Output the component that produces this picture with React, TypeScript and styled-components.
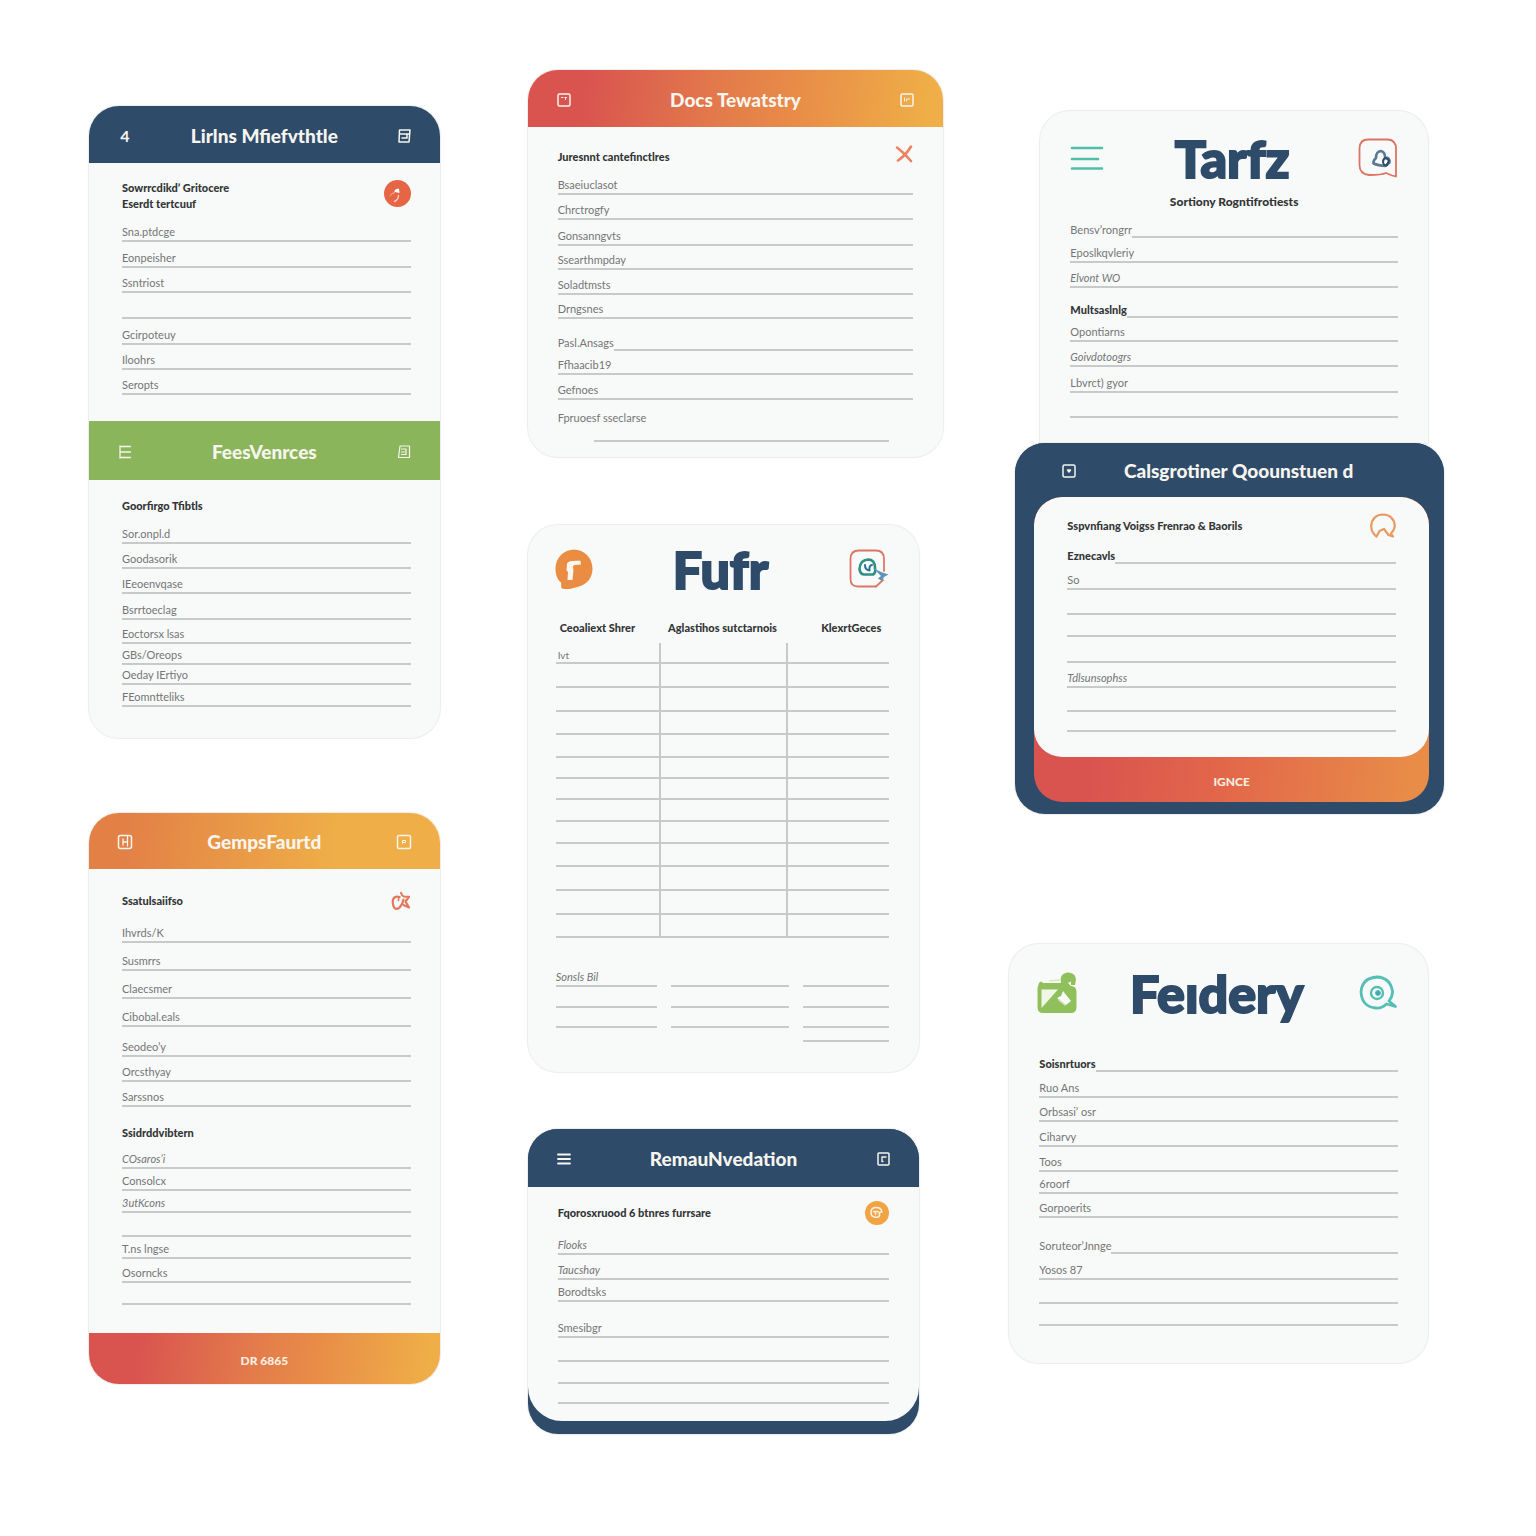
import React, { ReactNode, useId } from "react";
import styled, { createGlobalStyle, css } from "styled-components";

const color = {
  navy: "#2f4b6a",
  green: "#8ab55b",
  paper: "#f8f9f9",
  edge: "#ebecec",
  line: "#c8caca",
  ink: "#333536",
  label: "#747677",
  red: "#d9544f",
  coral: "#e2664a",
  orange: "#e88c48",
  amber: "#efae47",
  teal: "#4fc0a8",
};

const sunset = `linear-gradient(96deg, ${color.red} 14%, #e2784b 44%, ${color.orange} 64%, ${color.amber} 96%)`;
const dusk = `linear-gradient(96deg, ${color.red} 20%, ${color.coral} 50%, ${color.orange} 95%)`;
const dawn = `linear-gradient(96deg, #e28046 10%, ${color.amber} 70%)`;

const GlobalStyle = createGlobalStyle`
  *, *::before, *::after { box-sizing: border-box; }
  body { margin: 0; background: #fff; font-family: Lato, "Open Sans", sans-serif; color: ${color.ink}; }
  h1, h2, h3 { margin: 0; }
  button, input { font: inherit; border: 0; background: none; padding: 0; color: inherit; }
  svg { display: block; fill: none; stroke-linecap: round; stroke-linejoin: round; }
`;

const Page = styled.main`
  display: grid;
  grid-template-columns: minmax(0, 373fr) minmax(0, 416fr) minmax(0, 435fr);
  column-gap: 66px;
  align-items: start;
  padding: 70px 92px 100px 89px;
`;

const Column = styled.div<{ $top?: number; $right?: number }>`
  display: flex;
  flex-direction: column;
  padding-top: ${(p) => p.$top ?? 0}px;
  padding-right: ${(p) => p.$right ?? 0}px;
`;

const Card = styled.section<{
  $top?: number;
  $left?: number;
  $right?: number;
  $tone?: string;
  $flatBottom?: boolean;
}>`
  margin: ${(p) => `${p.$top ?? 0}px ${p.$right ?? 0}px 0 ${p.$left ?? 0}px`};
  background: ${(p) => p.$tone ?? color.paper};
  border-radius: ${(p) => (p.$flatBottom ? "30px 30px 0 0" : "30px")};
  box-shadow: 0 0 1px 1px ${color.edge};
  overflow: hidden;
`;

const Bar = styled.header<{ $height: number; $fill: string; $inset?: number }>`
  display: grid;
  grid-template-columns: 16px 1fr 16px;
  align-items: center;
  height: ${(p) => p.$height}px;
  padding: 2px 28px 0 ${(p) => p.$inset ?? 28}px;
  background: ${(p) => p.$fill};
  color: #f7f5ee;
`;

const BarTitle = styled.h2`
  font-size: 19px;
  line-height: 24px;
  font-weight: 900;
  text-align: center;
  white-space: nowrap;
`;

const IconButton = styled.button`
  display: flex;
  align-items: center;
  justify-content: center;
  cursor: pointer;
`;

const Glyph = styled.span`
  font-size: 16px;
  line-height: 16px;
  font-weight: 700;
`;

const Body = styled.div<{ $top?: number; $bottom: number; $left?: number; $right?: number }>`
  padding: ${(p) => `${p.$top ?? 0}px ${p.$right ?? 30}px ${p.$bottom}px ${p.$left ?? 30}px`};
`;

const SectionHead = styled.div<{ $tall?: boolean; $gap?: number; $raise?: boolean }>`
  display: flex;
  justify-content: space-between;
  align-items: ${(p) => (p.$raise ? "flex-start" : "center")};
  height: ${(p) => (p.$tall ? 32 : 24)}px;
  margin-top: ${(p) => p.$gap ?? 0}px;
`;

const SectionTitle = styled.h3`
  align-self: center;
  font-size: 11px;
  line-height: 16px;
  font-weight: 900;
`;

const Row = styled.div<{ $height: number; $bare?: boolean }>`
  display: flex;
  align-items: flex-end;
  height: ${(p) => p.$height}px;
  border-bottom: ${(p) => (p.$bare ? "0" : `2px solid ${color.line}`)};
`;

const Label = styled.label<{ $bold?: boolean; $italic?: boolean }>`
  font-size: 11px;
  line-height: 16px;
  white-space: nowrap;
  color: ${color.label};
  ${(p) => p.$italic && css`font-style: italic;`}
  ${(p) => p.$bold && css`font-weight: 900; color: ${color.ink};`}
`;

const Entry = styled.input<{ $ruled?: boolean }>`
  flex: 1;
  min-width: 0;
  height: 16px;
  font-size: 11px;
  outline: none;
  ${(p) => p.$ruled && css`border-bottom: 2px solid ${color.line};`}
`;

const ShortRule = styled.div`
  display: flex;
  padding: 0 24px 0 36px;
`;

const ActionButton = styled.button<{ $height: number; $fill?: string }>`
  display: block;
  width: 100%;
  height: ${(p) => p.$height}px;
  padding-top: 4px;
  background: ${(p) => p.$fill ?? "transparent"};
  color: #fbeee0;
  font-size: 12px;
  font-weight: 900;
  text-align: center;
  cursor: pointer;
`;

const Brand = styled.header<{ $top?: number; $height: number }>`
  display: grid;
  grid-template-columns: 36px 1fr 40px;
  align-items: center;
  justify-items: center;
  height: ${(p) => p.$height}px;
  margin-top: ${(p) => p.$top ?? 0}px;
  padding-bottom: 4px;
`;

const Wordmark = styled.h1`
  font-size: 52px;
  line-height: 60px;
  font-weight: 900;
  color: ${color.navy};
  -webkit-text-stroke: 2px ${color.navy};
`;

const Subtitle = styled.p`
  margin: 0;
  font-size: 12px;
  line-height: 20px;
  font-weight: 900;
  text-align: center;
`;

const Ledger = styled.table`
  width: 100%;
  table-layout: fixed;
  border-collapse: separate;
  border-spacing: 0;
`;

const LedgerHead = styled.th<{ $align: "left" | "center" | "right"; $width?: string }>`
  width: ${(p) => p.$width ?? "auto"};
  height: 26px;
  padding: 0 ${(p) => (p.$align === "right" ? 8 : 0)}px 4px ${(p) => (p.$align === "left" ? 4 : 0)}px;
  font-size: 11px;
  line-height: 16px;
  font-weight: 900;
  white-space: nowrap;
  text-align: ${(p) => p.$align};
`;

const LedgerCell = styled.td<{ $height: number }>`
  height: ${(p) => p.$height}px;
  padding: 0 0 0 2px;
  border-bottom: 2px solid ${color.line};
  font-size: 10px;
  line-height: 14px;
  vertical-align: bottom;
  color: ${color.label};
  & + & { border-left: 2px solid ${color.line}; }
`;

const SignOff = styled.div`
  display: grid;
  grid-template-columns: minmax(0, 102fr) minmax(0, 118fr) minmax(0, 87fr);
  column-gap: 14px;
  align-items: start;
  height: 104px;
`;

const Sheet = styled.div<{ $allRound?: boolean }>`
  background: ${color.paper};
  border-radius: ${(p) => (p.$allRound ? "28px" : "0 0 34px 34px")};
`;

const Tray = styled.div`
  margin: 0 15px 12px 19px;
  border-radius: 28px;
  background: ${dusk};
  overflow: hidden;
`;

const BottomLip = styled.div`
  height: 13px;
`;

type FieldProps = {
  height: number;
  label?: string;
  bold?: boolean;
  italic?: boolean;
  inline?: boolean;
  bare?: boolean;
};

function Field({ height, label, bold, italic, inline, bare }: FieldProps) {
  const id = useId();
  return (
    <Row $height={height} $bare={inline || bare}>
      {label && (
        <Label htmlFor={id} $bold={bold} $italic={italic}>
          {label}
        </Label>
      )}
      <Entry id={id} type="text" $ruled={inline} aria-label={label ? undefined : "Blank line"} />
    </Row>
  );
}

type FieldSpec = [number, string?, ("italic" | "inline" | "boldInline" | "bare")?];

function Fields({ rows }: { rows: FieldSpec[] }) {
  return (
    <>
      {rows.map(([height, label, kind], i) => (
        <Field
          key={i}
          height={height}
          label={label}
          italic={kind === "italic"}
          inline={kind === "inline" || kind === "boldInline"}
          bold={kind === "boldInline"}
          bare={kind === "bare"}
        />
      ))}
    </>
  );
}

type BarIconProps = { children?: ReactNode; name: string };

function BarIcon({ children, name }: BarIconProps) {
  return (
    <IconButton type="button" aria-label={name}>
      <svg width="16" height="16" viewBox="0 0 16 16" stroke="currentColor" strokeWidth="1.5">
        {children}
      </svg>
    </IconButton>
  );
}

const Box = () => <rect x="2" y="2" width="12" height="12" rx="1.5" />;

function ChirpBadge() {
  return (
    <svg width="27" height="27" viewBox="0 0 27 27">
      <circle cx="13.5" cy="13.5" r="13.5" fill="#e56545" />
      <path d="M10 11.5 L12 9 L15 8.6 L15.5 13 L13 12.4 Z" fill="#fff" />
      <path d="M6 15.5 Q8 13 10.5 12.5" stroke="#f3b7a4" strokeWidth="1" />
      <path d="M14.5 15.5 Q14.5 19.5 10.5 21.5" stroke="#f7cdbf" strokeWidth="1.4" />
    </svg>
  );
}

function StarLoop() {
  return (
    <svg width="20" height="20" viewBox="0 0 20 20" stroke="#e3785c" strokeWidth="2.2">
      <path d="M8.5 6 Q4 4.500 2.200 8 Q0.800 13 3.500 17 Q6.500 19 9 16 Q12 12.500 12.500 8.500" />
      <path d="M10 2 Q11 5 13 5.500 L18 5.800 L14.500 10.500 L18 16.500 L12.500 14" />
      <path d="M8.500 6 Q7 7.500 7.500 9.500" strokeWidth="1.600" />
    </svg>
  );
}

function CrossMark() {
  return (
    <svg width="18" height="18" viewBox="0 0 18 18" stroke="#ea8263" strokeWidth="2.6">
      <path d="M2 2.500 Q8 7 16 16" />
      <path d="M16 1.500 Q11 10 3 15.500" />
    </svg>
  );
}

function SpeechF() {
  return (
    <svg width="38" height="42" viewBox="0 0 38 42">
      <path
        d="M19 1.500 C29 1.500 37.500 10 37.500 20.500 C37.500 30 32 36 24 38.500 C18 40.500 12 42 7 40.500 C5.500 39.500 6.500 37 6 34.500 C2 31.500 0.500 26 0.500 20.500 C0.500 10 9 1.500 19 1.500 Z"
        fill="#ea8d42"
      />
      <path
        d="M12 15.500 C14 12.500 19 13 25.500 12.800 L26 16.500 L19.500 17 C17.500 17.500 18 20 18.500 22 L17.500 32 L12.500 32 L13 24 L11.500 22.500 Z"
        fill="#fdf6ee"
      />
    </svg>
  );
}

function EyeCard() {
  return (
    <svg width="40" height="40" viewBox="0 0 40 40">
      <path
        d="M27 37.500 H9 Q1.500 37.500 1.500 30 V10 Q1.500 1.500 10 1.500 H27 Q35 1.500 35 10 V22"
        stroke="#dc7768"
        strokeWidth="1.800"
      />
      <path d="M34 31 L27 37.500" stroke="#dc7768" strokeWidth="1.800" />
      <path
        d="M26 19 Q26 10.500 19 10.500 Q11 11 10.500 20 Q11 25 15 25.500 H24 Q27 24 26 19 Z"
        stroke="#2c9183"
        strokeWidth="2.600"
      />
      <path d="M16 16 Q16 21 20.500 21.500 Q20 16 23 16" stroke="#2b6f95" strokeWidth="2" />
      <path d="M24 19 L32 23 L39.500 25.500 L35 28 L33 32 L29 29.500 L32 27 Z" fill="#5d94b8" />
    </svg>
  );
}

function PhoneBadge() {
  return (
    <svg width="24" height="24" viewBox="0 0 24 24">
      <circle cx="12" cy="12" r="12" fill="#f0a444" />
      <path
        d="M6 11.500 Q6 6.500 11 6.500 Q16.500 6.500 16.800 11 L14 11.500 Q15.500 14 13.500 16 Q8 17 6.500 14 Z"
        stroke="#fdf0dc"
        strokeWidth="1.600"
      />
      <path d="M8.500 10.500 H13 M10.500 10.500 V13.500" stroke="#fdf0dc" strokeWidth="1.500" />
    </svg>
  );
}

function MintMenu() {
  return (
    <svg width="36" height="26" viewBox="0 0 36 26" stroke={color.teal} strokeWidth="2.600">
      <path d="M2 3 H32 M2 14 H28 M2 23.500 H32" />
    </svg>
  );
}

function ChatSquare() {
  return (
    <svg width="40" height="40" viewBox="0 0 40 40">
      <path
        d="M38 38.500 L34 37.500 L28 35 Q24 37 11 37 Q1.500 36 1.500 27 V10 Q2 1.500 10 1.500 H30 Q38 2 38 11 Z"
        stroke="#dc7464"
        strokeWidth="1.800"
      />
      <path
        d="M15.500 25.500 Q15 22.500 18 20 Q18 13.500 23 13 Q27 14 27 19 Q32 19.500 31.500 24.500 L27.500 28 Q20 27.500 15.500 25.500 Z"
        stroke="#5b7895"
        strokeWidth="2.600"
      />
      <path d="M25 24 Q25 20.500 28 20 L31 22.500 L29 27 Q25.500 28 25 24 Z" stroke={color.navy} strokeWidth="2" />
    </svg>
  );
}

function OpenRing() {
  return (
    <svg width="26" height="26" viewBox="0 0 26 26" stroke="#e79a62" strokeWidth="2.200">
      <path d="M6.500 23.500 Q1.200 19.500 1.200 13 Q2 2 13 1.500 Q24 2 24.800 13 Q24.500 17 21 20.500 L23 23.500 L18.500 22 L14 16 L9.500 18 L6.500 23.500 Z" />
    </svg>
  );
}

function GreenBag() {
  return (
    <svg width="40" height="42" viewBox="0 0 40 42">
      <path
        d="M2 11 Q4 8 6 11 L24 11 Q22 2 30 0.500 Q38 0 39 7 L38 13 H34 V9.500 L31 11 L34 14 Q39.500 14 39.500 20 V35 Q39.500 41 34 41 H6 Q0.500 41 0.500 35 V16 Z"
        fill="#90c05c"
      />
      <path d="M4.500 17.500 H21 L4.500 36 Z" fill="#f1f7e8" />
      <path d="M26 19 L34 29 L29 33 L20 26 L24 24 Z" fill="#f8f9f9" />
      <path d="M22 28 L28 33 M13 9 L22 8" stroke="#d3e7ba" strokeWidth="1.500" />
    </svg>
  );
}

function TealTarget() {
  return (
    <svg width="38" height="36" viewBox="0 0 38 36" stroke="#56bfb5">
      <path
        d="M30 26 Q34 21 33.500 16 Q31 2.500 18 2 Q3 3 2 17 Q3 32 17 33 Q23 33.500 27.500 29 L36.500 31.500 L30 26"
        strokeWidth="2.800"
      />
      <circle cx="18" cy="18" r="6" strokeWidth="2.400" />
      <circle cx="19" cy="18" r="2.500" fill="#3fa6ad" strokeWidth="1" />
    </svg>
  );
}

const ledgerRows = [21, 24, 24, 23, 23, 21, 21, 22, 22, 23, 24, 24, 23];

export default function App() {
  return (
    <>
      <GlobalStyle />
      <Page>
        <Column $top={36} $right={22}>
          <Card>
            <Bar $height={57} $fill={color.navy}>
              <IconButton type="button" aria-label="Step 4">
                <Glyph>4</Glyph>
              </IconButton>
              <BarTitle>Lirlns Mfiefvthtle</BarTitle>
              <BarIcon name="Save">
                <path d="M3.500 2 H14 L13 14 H3 Z M3.500 6 H13.500 M6 10 H11 V6" />
              </BarIcon>
            </Bar>
            <Body $top={17} $bottom={26} $left={33} $right={29}>
              <SectionHead $tall $raise>
                <SectionTitle>
                  Sowrrcdikd’ Gritocere
                  <br />
                  Eserdt tertcuuf
                </SectionTitle>
                <ChirpBadge />
              </SectionHead>
              <Fields
                rows={[
                  [30, "Sna.ptdcge"],
                  [26, "Eonpeisher"],
                  [25, "Ssntriost"],
                  [26],
                  [26, "Gcirpoteuy"],
                  [25, "Iloohrs"],
                  [25, "Seropts"],
                ]}
              />
            </Body>
            <Bar $height={59} $fill={color.green}>
              <BarIcon name="List">
                <path d="M3 2 V14 M3 2.500 H13.500 M3 8 H13.500 M3 13.500 H13.500" strokeWidth="1.300" />
              </BarIcon>
              <BarTitle>FeesVenrces</BarTitle>
              <BarIcon name="Note">
                <path d="M4 2 H13.500 V13.500 H2.500 Z M5.500 5 H10 V10.500 H5.500 M5.500 8 H8.500" strokeWidth="1.200" />
              </BarIcon>
            </Bar>
            <Body $top={14} $bottom={31} $left={33} $right={29}>
              <SectionHead>
                <SectionTitle>Goorfirgo Tfibtls</SectionTitle>
              </SectionHead>
              <Fields
                rows={[
                  [26, "Sor.onpl.d"],
                  [25, "Goodasorik"],
                  [25, "IEeoenvqase"],
                  [26, "Bsrrtoeclag"],
                  [24, "Eoctorsx lsas"],
                  [21, "GBs/Oreops"],
                  [20, "Oeday IErtiyo"],
                  [22, "FEomntteliks"],
                ]}
              />
            </Body>
          </Card>

          <Card $top={75}>
            <Bar $height={56} $fill={dawn}>
              <BarIcon name="Panel">
                <rect x="1.500" y="1.500" width="13" height="13" rx="2" />
                <path d="M6 5 V11 M6 8 H9.500 M10.500 2 V12" strokeWidth="1.300" />
              </BarIcon>
              <BarTitle>GempsFaurtd</BarTitle>
              <BarIcon name="Frame">
                <rect x="1.500" y="1.500" width="13" height="13" rx="1.500" />
                <path d="M6.500 9.500 V6.500 H9.500 V8.500 H7.500" strokeWidth="1" />
              </BarIcon>
            </Bar>
            <Body $top={20} $bottom={28} $left={33} $right={29}>
              <SectionHead>
                <SectionTitle>Ssatulsaiifso</SectionTitle>
                <StarLoop />
              </SectionHead>
              <Fields
                rows={[
                  [30, "Ihvrds/K"],
                  [28, "Susmrrs"],
                  [28, "Claecsmer"],
                  [28, "Cibobal.eals"],
                  [30, "Seodeo’y"],
                  [25, "Orcsthyay"],
                  [25, "Sarssnos"],
                ]}
              />
              <SectionHead $gap={14}>
                <SectionTitle>Ssidrddvibtern</SectionTitle>
              </SectionHead>
              <Fields
                rows={[
                  [24, "COsaros’i", "italic"],
                  [22, "Consolcx"],
                  [22, "3utKcons", "italic"],
                  [24],
                  [22, "T.ns lngse"],
                  [24, "Osorncks"],
                  [22],
                ]}
              />
            </Body>
            <ActionButton type="button" $height={51} $fill={sunset}>
              DR 6865
            </ActionButton>
          </Card>
        </Column>

        <Column>
          <Card>
            <Bar $height={57} $fill={sunset}>
              <BarIcon name="Notes">
                <Box />
                <path d="M5.500 5.500 H7 M9 5.500 H10.500 M9.500 5.500 V7.500" strokeWidth="1" />
              </BarIcon>
              <BarTitle>Docs Tewatstry</BarTitle>
              <BarIcon name="Frame">
                <Box />
                <path d="M5.500 6 V9 M7.500 9 V7 H10.500" strokeWidth="1" />
              </BarIcon>
            </Bar>
            <Body $top={18} $bottom={15}>
              <SectionHead $raise>
                <SectionTitle>Juresnnt cantefinctlres</SectionTitle>
                <CrossMark />
              </SectionHead>
              <Fields
                rows={[
                  [26, "Bsaeiuclasot"],
                  [25, "Chrctrogfy"],
                  [26, "Gonsanngvts"],
                  [24, "Ssearthmpday"],
                  [25, "Soladtmsts"],
                  [24, "Drngsnes"],
                  [32, "Pasl.Ansags", "inline"],
                  [24, "Ffhaacib19"],
                  [25, "Gefnoes"],
                  [26, "Fpruoesf sseclarse", "bare"],
                ]}
              />
              <ShortRule>
                <Entry type="text" $ruled aria-label="Signature" />
              </ShortRule>
            </Body>
          </Card>

          <Card $top={68} $right={24}>
            <Body $left={28} $bottom={30}>
              <Brand $height={92}>
                <SpeechF />
                <Wordmark>Fufr</Wordmark>
                <EyeCard />
              </Brand>
              <Ledger>
                <thead>
                  <tr>
                    <LedgerHead $align="left" $width="31%">Ceoaliext Shrer</LedgerHead>
                    <LedgerHead $align="center">Aglastihos sutctarnois</LedgerHead>
                    <LedgerHead $align="right" $width="31%">KlexrtGeces</LedgerHead>
                  </tr>
                </thead>
                <tbody>
                  {ledgerRows.map((h, i) => (
                    <tr key={i}>
                      <LedgerCell $height={h}>{i === 0 ? "Ivt" : ""}</LedgerCell>
                      <LedgerCell $height={h} />
                      <LedgerCell $height={h} />
                    </tr>
                  ))}
                </tbody>
              </Ledger>
              <SignOff>
                <div>
                  <Fields rows={[[49, "Sonsls Bil", "italic"], [21], [20]]} />
                </div>
                <div>
                  <Fields rows={[[49], [21], [20]]} />
                </div>
                <div>
                  <Fields rows={[[49], [21], [20], [14]]} />
                </div>
              </SignOff>
            </Body>
          </Card>

          <Card $top={57} $right={24} $tone={color.navy}>
            <Bar $height={58} $fill={color.navy}>
              <BarIcon name="Menu">
                <path d="M2 3.500 H14 M2 8 H14 M2 12.500 H14" strokeWidth="1.800" />
              </BarIcon>
              <BarTitle>RemauNvedation</BarTitle>
              <BarIcon name="Page">
                <rect x="3" y="2" width="11" height="12" rx="1" />
                <path d="M7 10.500 V6 H11 M7 10.500 H8" strokeWidth="1.300" />
              </BarIcon>
            </Bar>
            <Sheet>
              <Body $top={14} $bottom={17}>
                <SectionHead>
                  <SectionTitle>Fqorosxruood 6 btnres furrsare</SectionTitle>
                  <PhoneBadge />
                </SectionHead>
                <Fields
                  rows={[
                    [30, "Flooks", "italic"],
                    [25, "Taucshay", "italic"],
                    [22, "Borodtsks"],
                    [36, "Smesibgr"],
                    [24],
                    [22],
                    [20],
                  ]}
                />
              </Body>
            </Sheet>
            <BottomLip />
          </Card>
        </Column>

        <Column $top={41}>
          <Card $left={31} $right={16} $flatBottom>
            <Body $bottom={25}>
              <Brand $top={17} $height={64}>
                <MintMenu />
                <Wordmark>Tarfz</Wordmark>
                <ChatSquare />
              </Brand>
              <Subtitle>Sortiony Rogntifrotiests</Subtitle>
              <Fields
                rows={[
                  [26, "Bensv’rongrr", "inline"],
                  [25, "Eposlkqvleriy"],
                  [25, "Elvont WO", "italic"],
                  [30, "Multsaslnlg", "boldInline"],
                  [24, "Opontiarns"],
                  [25, "Goivdotoogrs", "italic"],
                  [26, "Lbvrct) gyor"],
                  [25],
                ]}
              />
            </Body>
          </Card>

          <Card $left={6} $tone={color.navy}>
            <Bar $height={54} $fill={color.navy} $inset={46}>
              <BarIcon name="Frame">
                <Box />
                <path d="M6.500 7 L8 9 L9.500 7 Z" />
              </BarIcon>
              <BarTitle>Calsgrotiner Qoounstuen d</BarTitle>
            </Bar>
            <Tray>
              <Sheet $allRound>
                <Body $top={17} $bottom={25} $left={33} $right={33}>
                  <SectionHead>
                    <SectionTitle>Sspvnfiang Voigss Frenrao &amp; Baorils</SectionTitle>
                    <OpenRing />
                  </SectionHead>
                  <Fields
                    rows={[
                      [26, "Eznecavls", "boldInline"],
                      [26, "So"],
                      [25],
                      [22],
                      [26],
                      [25, "Tdlsunsophss", "italic"],
                      [24],
                      [20],
                    ]}
                  />
                </Body>
              </Sheet>
              <ActionButton type="button" $height={45}>
                IGNCE
              </ActionButton>
            </Tray>
          </Card>

          <Card $top={130} $right={16}>
            <Body $bottom={37}>
              <Brand $height={102}>
                <GreenBag />
                <Wordmark>Feıdery</Wordmark>
                <TealTarget />
              </Brand>
              <Fields
                rows={[
                  [26, "Soisnrtuors", "boldInline"],
                  [26, "Ruo Ans"],
                  [24, "Orbsasi’ osr"],
                  [25, "Ciharvy"],
                  [25, "Toos"],
                  [22, "6roorf"],
                  [24, "Gorpoerits"],
                  [36, "Soruteor’Jnnge", "inline"],
                  [26, "Yosos 87"],
                  [24],
                  [22],
                ]}
              />
            </Body>
          </Card>
        </Column>
      </Page>
    </>
  );
}
